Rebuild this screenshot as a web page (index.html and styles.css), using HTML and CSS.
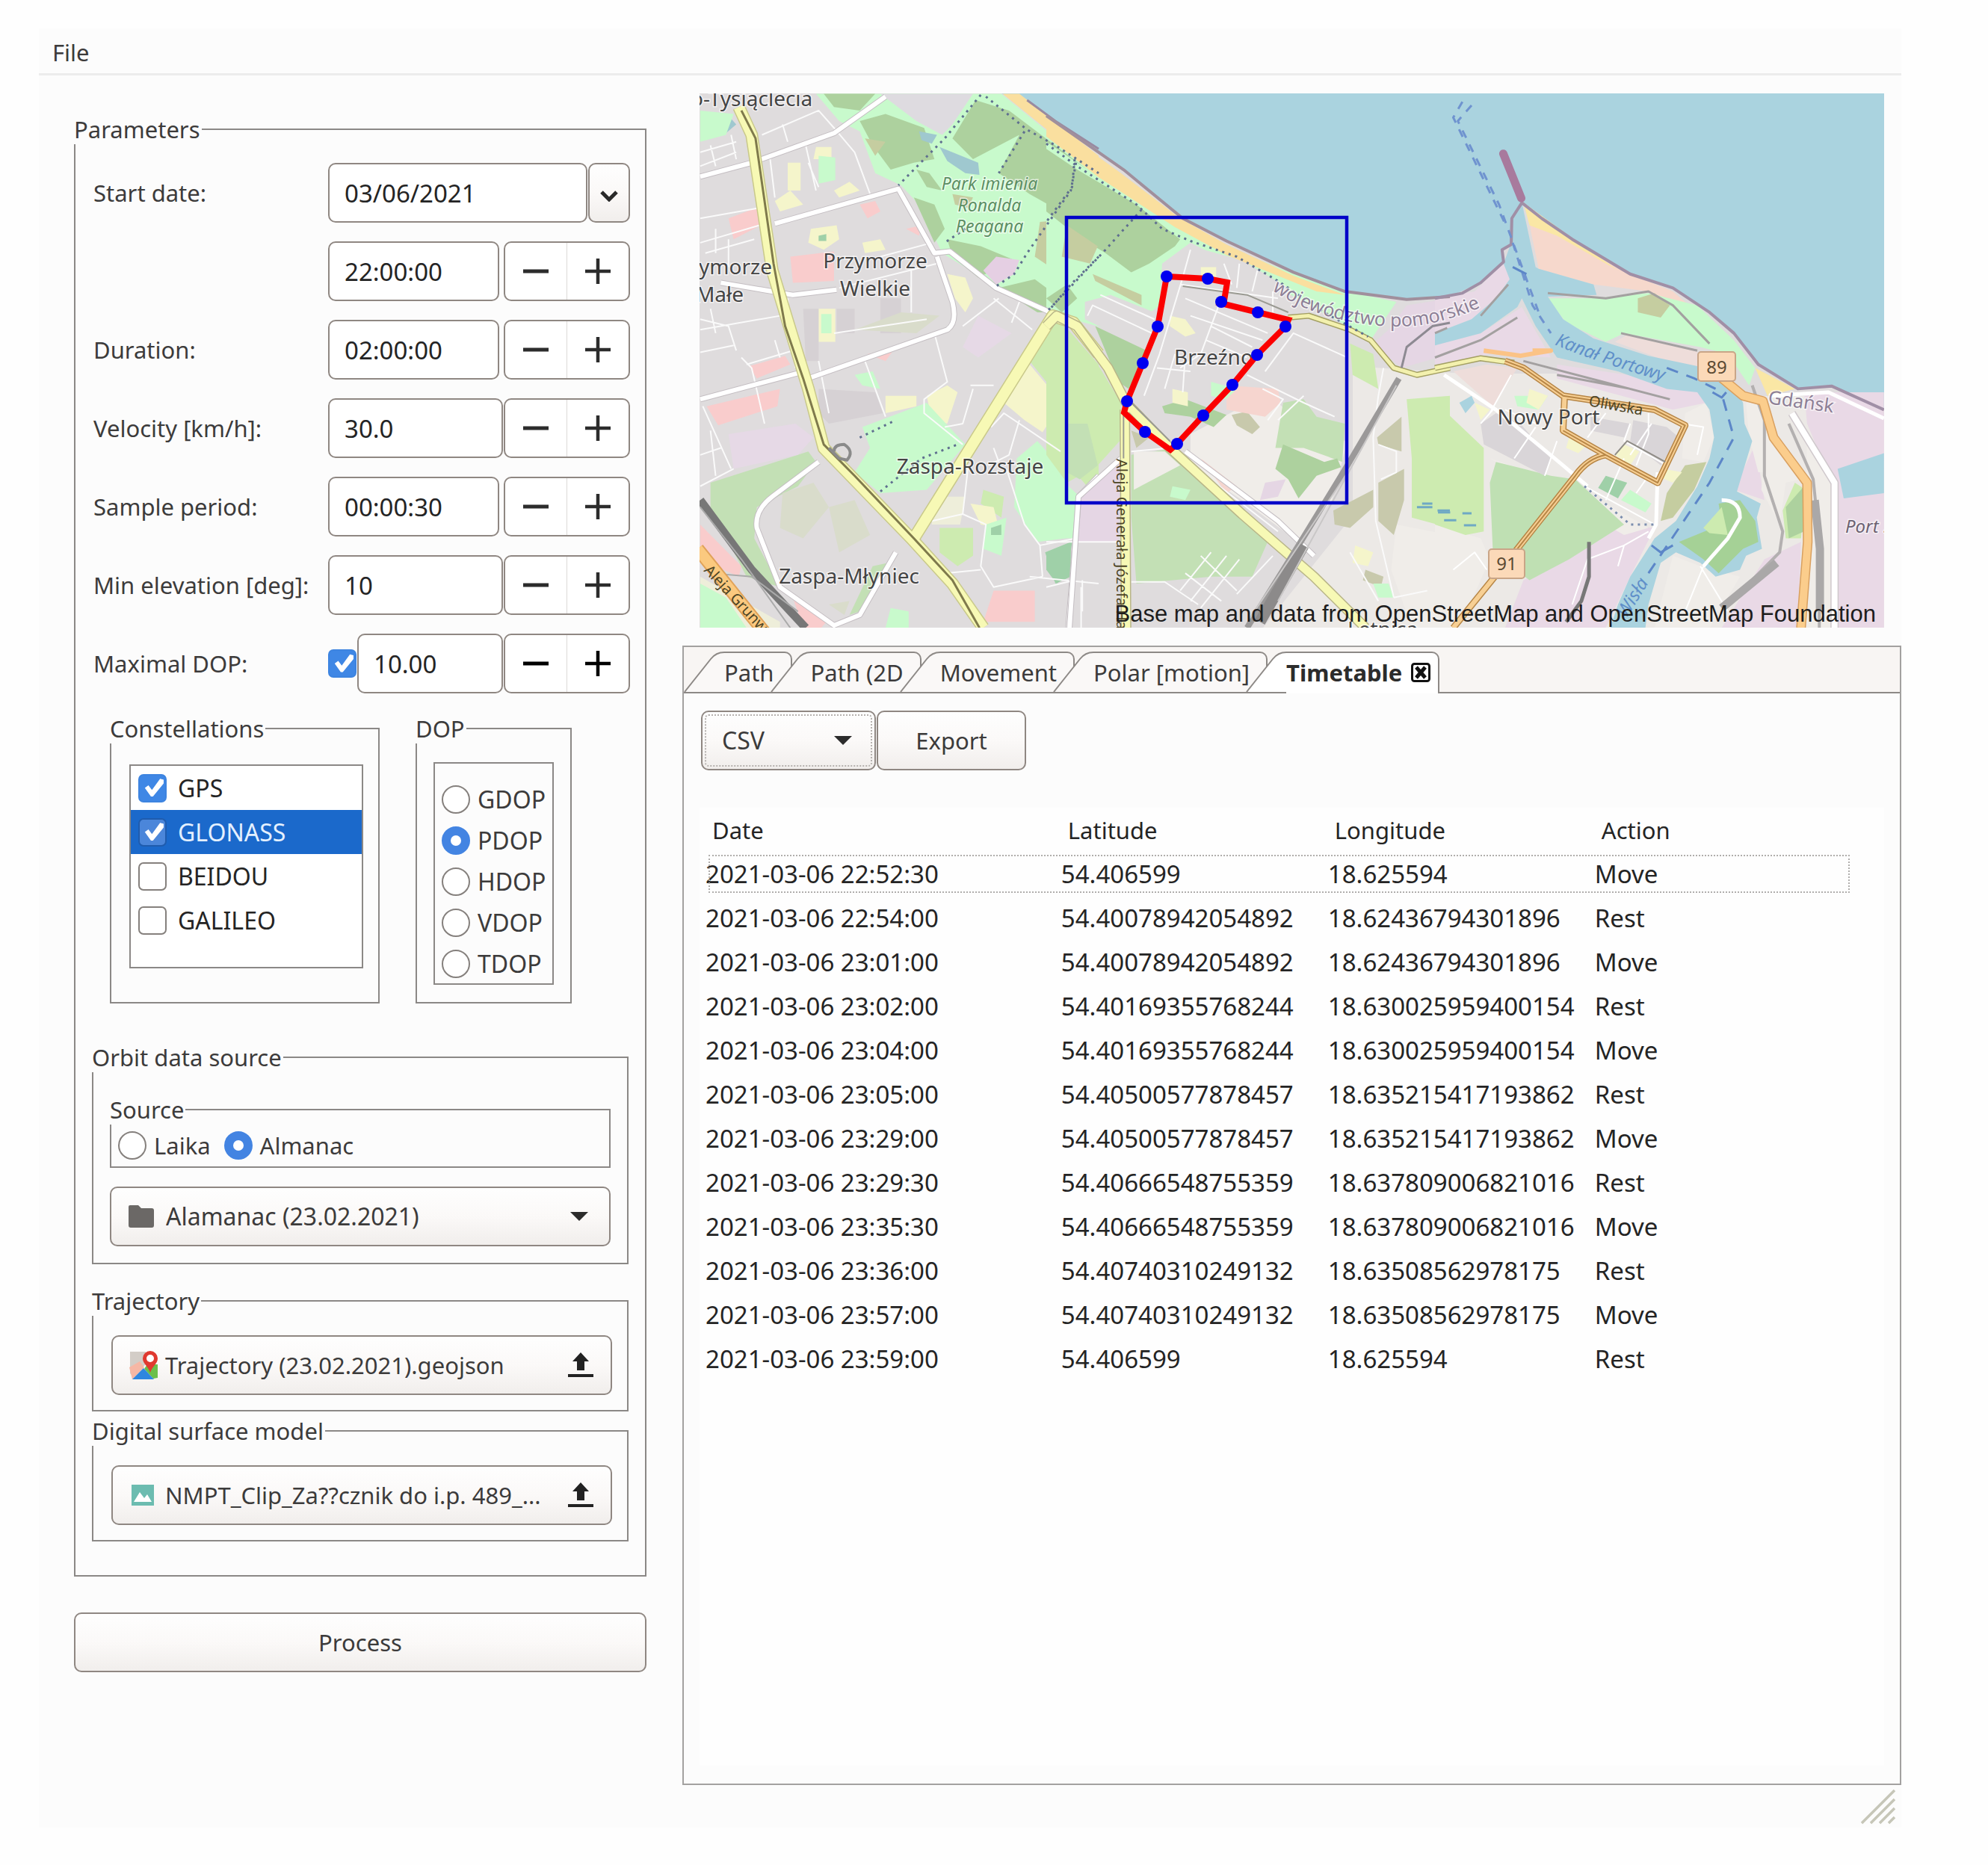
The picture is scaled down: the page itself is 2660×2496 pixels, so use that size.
FILE: index.html
```html
<!DOCTYPE html>
<html lang="en">
<head>
<meta charset="utf-8">
<title>GNSS planning</title>
<link rel="stylesheet" href="styles.css">
</head>
<body>
<svg class="defs" width="0" height="0" aria-hidden="true">
  <symbol id="minus" viewBox="0 0 34 34"><path d="M0 17H34" stroke="currentColor" stroke-width="5"/></symbol>
  <symbol id="plus" viewBox="0 0 34 34"><path d="M0 17H34M17 0V34" stroke="currentColor" stroke-width="4.5"/></symbol>
  <symbol id="caret" viewBox="0 0 24 12"><path d="M0 0H24L12 12Z" fill="currentColor"/></symbol>
  <symbol id="upload" viewBox="0 0 34 34"><path d="M17 0L28 12H22V24H12V12H6ZM0 29H34V33H0Z" fill="currentColor"/></symbol>
  <symbol id="slant" viewBox="0 0 54 54"><path d="M1 54L36 10Q43 1 54 1V54Z" fill="var(--tab)"/><path d="M1 54L36 10Q43 1 54 1" fill="none" stroke="#8d8986" stroke-width="2"/></symbol>
</svg>
<div class="window">
  <nav class="menubar"><button type="button" class="menu">File</button></nav>
  <main class="main">
    <form class="sidebar">
      <fieldset class="group params">
        <legend>Parameters</legend>
        <div class="rows">
          <div class="row"><label for="date">Start date:</label><div class="field"><input id="date" class="text" type="text" value="03/06/2021"><button type="button" class="drop" aria-label="Open calendar"><svg width="24" height="16" viewBox="0 0 24 16"><path d="M2 3L12 13L22 3" fill="none" stroke="#2a2a2a" stroke-width="5"/></svg></button></div></div>
          <div class="row"><span></span><div class="field time"><input class="text" type="text" value="22:00:00" aria-label="Start time"><div class="spin"><button type="button" aria-label="Less"><svg><use href="#minus"/></svg></button><button type="button" aria-label="More"><svg><use href="#plus"/></svg></button></div></div></div>
          <div class="row"><label for="dur">Duration:</label><div class="field time"><input id="dur" class="text" type="text" value="02:00:00"><div class="spin"><button type="button" aria-label="Less"><svg><use href="#minus"/></svg></button><button type="button" aria-label="More"><svg><use href="#plus"/></svg></button></div></div></div>
          <div class="row"><label for="vel">Velocity [km/h]:</label><div class="field"><input id="vel" class="text" type="text" value="30.0"><div class="spin"><button type="button" aria-label="Less"><svg><use href="#minus"/></svg></button><button type="button" aria-label="More"><svg><use href="#plus"/></svg></button></div></div></div>
          <div class="row"><label for="per">Sample period:</label><div class="field time"><input id="per" class="text" type="text" value="00:00:30"><div class="spin"><button type="button" aria-label="Less"><svg><use href="#minus"/></svg></button><button type="button" aria-label="More"><svg><use href="#plus"/></svg></button></div></div></div>
          <div class="row"><label for="elev">Min elevation [deg]:</label><div class="field"><input id="elev" class="text" type="text" value="10"><div class="spin"><button type="button" aria-label="Less"><svg><use href="#minus"/></svg></button><button type="button" aria-label="More"><svg><use href="#plus"/></svg></button></div></div></div>
          <div class="row"><label for="maxdop">Maximal DOP:</label><div class="field"><input type="checkbox" class="check" checked aria-label="Limit DOP"><input id="maxdop" class="text" type="text" value="10.00"><div class="spin strong"><button type="button" aria-label="Less"><svg><use href="#minus"/></svg></button><button type="button" aria-label="More"><svg><use href="#plus"/></svg></button></div></div></div>
        </div>

        <div class="pair">
          <fieldset class="group constellations">
            <legend>Constellations</legend>
            <div class="list">
              <label><input type="checkbox" class="check" checked>GPS</label>
              <label class="selected"><input type="checkbox" class="check" checked>GLONASS</label>
              <label><input type="checkbox" class="check">BEIDOU</label>
              <label><input type="checkbox" class="check">GALILEO</label>
            </div>
          </fieldset>
          <fieldset class="group dop">
            <legend>DOP</legend>
            <div class="radios">
              <label><input type="radio" name="dop" class="radio">GDOP</label>
              <label><input type="radio" name="dop" class="radio" checked>PDOP</label>
              <label><input type="radio" name="dop" class="radio">HDOP</label>
              <label><input type="radio" name="dop" class="radio">VDOP</label>
              <label><input type="radio" name="dop" class="radio">TDOP</label>
            </div>
          </fieldset>
        </div>

        <fieldset class="group orbit">
          <legend>Orbit data source</legend>
          <fieldset class="group source">
            <legend>Source</legend>
            <div class="inline">
              <label><input type="radio" name="src" class="radio">Laika</label>
              <label><input type="radio" name="src" class="radio" checked>Almanac</label>
            </div>
          </fieldset>
          <div class="combo">
            <svg class="combo-icon" width="34" height="32" viewBox="0 0 34 32"><path d="M2 1H13L17 5H31Q34 5 34 8V28Q34 31 31 31H3Q0 31 0 28V3Q0 1 2 1Z" fill="#6b6866"/></svg>
            <select class="button" aria-label="Almanac"><option>Alamanac (23.02.2021)</option></select>
            <svg class="caret" width="24" height="12"><use href="#caret"/></svg>
          </div>
        </fieldset>

        <fieldset class="group file">
          <legend>Trajectory</legend>
          <button type="button" class="button file-button">
            <svg width="38" height="38" viewBox="0 0 38 38"><path d="M1 1H22V18L5 34L1 30Z" fill="#d3cdc7"/><path d="M0 22L14 14L20 22L4 38Z" fill="#f6b7a5"/><path d="M24 18H38V36L32 37L20 24Z" fill="#6bbf4b"/><path d="M19 23L33 38H4Z" fill="#2f86e0"/><path d="M28 0A10 10 0 0 1 38 10C38 17 31 20 28 29C25 20 18 17 18 10A10 10 0 0 1 28 0Z" fill="#e0392f"/><circle cx="28" cy="10" r="5" fill="#fff"/></svg>
            <span>Trajectory (23.02.2021).geojson</span>
            <svg width="34" height="34"><use href="#upload"/></svg>
          </button>
        </fieldset>

        <fieldset class="group file dsm">
          <legend>Digital surface model</legend>
          <button type="button" class="button file-button">
            <svg width="38" height="38" viewBox="0 0 38 38"><path d="M3 5H33V33H3Z" fill="#6cbcb0"/><path d="M6 28L14 15L20 23L24 18L30 28Z" fill="#fff"/></svg>
            <span>NMPT_Clip_Za??cznik do i.p. 489_...</span>
            <svg width="34" height="34"><use href="#upload"/></svg>
          </button>
        </fieldset>
      </fieldset>
      <button type="button" class="button process">Process</button>
    </form>

    <section class="content">
      <svg class="map" viewBox="936 125 1585 715" role="img" aria-label="Map of Gdańsk with trajectory">
        <rect x="936" y="125" width="1585" height="715" fill="#aad3df"/>
        <path fill="#dfdcdd" d="M936 125H1340L1400 155L1503 227L1582 292L1641 322L1731 364L1799 390L1882 401L1940 397L1981 378L2012 350L2010 334L2022 325L2022 292L2036 269L2104 320L2185 367L2238 385L2287 418L2320 446L2353 488L2402 520L2451 516L2521 548V840H936Z"/>
        <path fill="#ece9e6" d="M1810 490L1960 500L2100 500L2280 530L2440 530L2521 560V840H1690L1810 690Z"/>

        <!-- west: areas -->
        <g class="ns" transform="translate(930 120) scale(.34439 .46556)">
          <path fill="#c8facc" d="M470 12H1190L1568 240V640L1380 640L1180 570L960 470L870 330L800 275L700 240L640 120L560 90Z"/>
          <path fill="#add19e" d="M500 12H700L640 60L540 50ZM640 90L740 70L890 110L930 200L850 210L760 230L690 160ZM1090 30L1220 60L1560 250L1568 330L1420 350L1300 300L1180 240L1260 130L1080 200L1000 140ZM1280 120L1480 210L1568 260V380L1420 330L1200 240ZM860 230L910 240L960 290L900 280ZM850 310L930 330L970 400L930 440ZM980 430L1110 450L1240 490L1100 540L1000 480ZM1180 570L1320 545L1420 600L1400 640L1330 640Z"/>
          <path fill="#c5cda0" d="M1340 380L1500 370L1568 390V480L1400 520L1320 480ZM660 140L740 150L700 190ZM1000 300L1080 310L1060 340L1010 330Z"/>
          <path fill="#dedbe0" d="M720 12H1080L1000 100L960 130L860 90Z"/>
          <path fill="#e5cfe3" d="M1170 480L1260 490L1240 530L1170 560L1120 520Z"/>
          <path fill="#9fc8cf" d="M870 120L940 130L920 155L880 145ZM950 165L1000 180L1100 210L1105 245L1050 240L980 205ZM130 75L160 100L120 125L100 120ZM810 955H870V985L820 980Z"/>
          <path fill="#cdebb0" d="M1380 650L1450 690L1568 790V1180L1500 1120L1400 1060L1390 980L1430 900L1300 780ZM950 1260H1080V1340L1020 1370L950 1330ZM1120 1150L1200 1170L1190 1230L1110 1190Z"/>
          <path fill="#f5f5cb" d="M1300 790L1425 900L1350 985L1280 950L1200 900ZM900 880L980 850L1020 870L980 960L920 950ZM1070 1190L1160 1200L1180 1260L1110 1250ZM740 880H860V910L740 930ZM450 400L550 390L560 430L500 460L440 440ZM480 630H545V725H480ZM360 210H410V290H360ZM470 165H530V200H460ZM540 290L600 265L640 290L560 310ZM310 320L370 290L420 330L330 350ZM980 530L1050 540L1080 600L1050 640L1010 600ZM650 440L720 430L740 460L660 470Z"/>
          <path fill="#c8facc" d="M650 970L900 900L1050 1020L900 1150L720 1160L620 1100L680 1030ZM1250 1060L1330 1010L1450 1110L1440 1290L1330 1300L1240 1200ZM490 645H530V700H490ZM480 190L545 195V260L480 270ZM620 820L690 810L720 860L650 850ZM20 60L150 70L120 130L20 150ZM1130 1250L1210 1230L1190 1340L1120 1320ZM760 1490L830 1500V1547H740Z"/>
          <path fill="#c3e0b5" d="M60 1130L440 1040L470 1070L400 1140L240 1200L230 1290L330 1430L200 1400L60 1200ZM690 1370L750 1360L640 1500L600 1510Z"/>
          <path fill="#9fd0a8" d="M1360 1330L1460 1300V1400L1400 1420ZM480 420L510 415V435H480ZM1150 1260L1190 1250V1280L1150 1280Z"/>
          <path fill="#f9cccc" d="M130 370L255 335V390L150 430ZM370 480L540 465V550L380 555ZM210 795L350 765L370 790L240 830ZM45 910L330 860L320 910L90 965ZM20 1250L180 1370L170 1400L80 1370L20 1320ZM640 330L700 320L720 350L670 370ZM820 400L880 390L870 420ZM670 760L770 750L740 780ZM1160 1440L1320 1440V1530H1120ZM380 1460L510 1530L490 1547L420 1547Z"/>
          <path fill="#e6d9e6" d="M130 990L390 960L460 1000L400 1050L150 1090ZM1100 650L1230 700L1100 770L1040 740ZM1490 1180L1568 1140V1300H1490Z"/>
          <path fill="#d6d1d4" d="M420 630H480V780H430ZM550 630H620V700H550ZM720 600H800V700H720ZM480 860L700 870L730 930L520 960L480 930Z"/>
          <path fill="#d9dccb" d="M340 1160L460 1130L520 1200L420 1290L330 1260ZM520 1200L620 1180L680 1280L560 1330ZM620 690L800 640L950 650L860 700ZM520 1480L600 1470L580 1510Z"/>
          <path fill="#eeeeda" d="M20 1400L330 1530L330 1547H20ZM920 1170H1050L1030 1250L920 1250Z"/>
          <path fill="#c8facc" d="M20 1420L120 1460L200 1547H20Z"/>
          <path fill="#fadf9f" d="M1195 12H1260L1568 190V235Z"/>
        </g>

        <!-- centre: areas -->
        <g class="ns" transform="translate(1400 120) scale(.34439 .46556)">
          <path fill="#c8facc" d="M0 150L200 250L500 380L760 470L1000 540L1170 580L1360 610L1260 720L1170 680L900 570L560 440L450 500L440 620L300 700L0 640Z"/>
          <path fill="#add19e" d="M0 170L120 230L350 330L520 430L500 450L400 500L330 525L230 470L120 420L0 350ZM0 600L80 560L120 600L60 640ZM190 680L390 750L320 860L280 840Z"/>
          <path fill="#c5cda0" d="M80 390L200 450L170 500L60 480ZM180 530L370 590L370 620L190 550Z"/>
          <path fill="#dfdcdd" d="M150 610L250 590L420 640L430 710L400 750L150 660ZM560 450L760 490L940 570L960 640L700 600L520 560Z"/>
          <path fill="#cdebb0" d="M0 680L80 690L200 790L290 900L285 1010L200 1080L80 1130L0 1050ZM1400 890L1568 880V1260L1420 1230L1420 1060ZM1180 730L1270 760L1290 860L1190 820Z"/>
          <path fill="#c3e0b5" d="M330 1050L500 1030L700 1180L860 1300L800 1400L640 1400L350 1420L330 1230ZM80 960L160 960L200 1080L130 1120L80 1100Z"/>
          <path fill="#f0ede9" d="M560 990L740 920L900 900L1040 1000L1170 1010L1110 1180L980 1300L760 1180L560 1080ZM1360 1250L1568 1280V1547H1420L1340 1380ZM340 1040L460 1040L520 1080L340 1150Z"/>
          <path fill="#c3e0b5" d="M920 900L1000 890L1050 940L1160 960L1150 1070L1000 1030L890 1030Z"/>
          <path fill="#add19e" d="M920 1020L1080 1070L1130 1060L1145 1085L1050 1110L980 1175L940 1120L890 1090ZM450 910L540 890L700 935L650 970L560 940L460 930Z"/>
          <path fill="#c8c9ac" d="M1285 1000L1380 940V1040L1290 1020ZM1290 1130L1390 1090V1180L1350 1280L1290 1240ZM1115 1210L1270 1150V1200L1180 1260L1120 1250ZM720 935L780 925L830 970L800 990L740 965ZM330 980L400 1000L350 1030ZM1240 1380L1310 1400L1300 1430L1230 1410Z"/>
          <path fill="#e5d6e4" d="M130 1180L290 1060L280 1300H120ZM850 1130L930 1120L900 1170L830 1180ZM1400 620L1568 600V760L1380 800L1270 730L1330 690Z"/>
          <path fill="#f6d5cf" d="M700 850L900 860L910 900L850 940L700 920ZM600 1060L740 1140L700 1160Z"/>
          <path fill="#f5f5cb" d="M480 650L540 660L580 700L540 710L480 680ZM490 860L550 870L550 910L490 900ZM1200 1310L1270 1330L1250 1370L1190 1360ZM600 510L660 510V540H600Z"/>
          <path fill="#c8facc" d="M490 1140L560 1150L540 1180L480 1170ZM0 1080L130 1170L110 1290H0ZM640 840L740 860L700 890L640 880ZM1270 1420L1330 1420L1350 1460L1290 1460Z"/>
          <path fill="#9fd0a8" d="M0 1330L100 1300L80 1400L40 1420L0 1380Z"/>
          <path fill="#fadf9f" d="M0 85L290 240L520 370L700 445L960 535L1160 590L1050 580L700 475L500 395L200 250L0 135Z"/>
        </g>

        <!-- east: areas -->
        <g class="ns" transform="translate(1920 120) scale(.40816 .46556)">
          <path fill="#e9d9e6" d="M0 600L130 580L225 500L245 545L200 600L120 660L0 700ZM0 735L150 700L285 625L380 770L180 760L0 790ZM400 790L860 850L890 900L780 920L400 830ZM1210 870H1472V1547H1310V1150L1220 960ZM980 1150L1050 1020L1080 1180ZM290 1410L600 1250L720 1260L640 1400L560 1547H230ZM1080 1350L1200 1300L1190 1547H940Z"/>
          <path fill="#f6d8cc" d="M300 330L380 390L640 530L780 580L860 640L700 580L520 560L340 515L315 410Z"/>
          <path fill="#fae7a5" d="M290 325L440 420L600 520L400 420L310 390ZM1050 800L1180 860L1090 880Z"/>
          <path fill="#c8facc" d="M370 600L520 600L700 585L860 620L980 720L1050 800L1030 850L960 760L870 740L620 700L560 725L430 670Z"/>
          <path fill="#c5cda0" d="M665 600L720 585L770 620L740 655L665 640Z"/>
          <path fill="#eeddda" d="M590 725L630 705L860 750L860 800L760 780ZM60 810L170 790L270 800L190 910Z"/>
          <path fill="#f0ede9" d="M820 930L890 900L915 1000L880 1070L810 1060ZM1020 900L1080 890L1090 1100L1060 1100L1030 1000ZM1090 960L1200 1120L1150 1130L1130 1250L1070 1150ZM0 1250L150 1290L180 1350L80 1547H0ZM780 1340L870 1370L1000 1400L900 1547H720ZM1220 1000L1300 1100V1547H1210ZM180 1060L480 1150L700 1260L620 1280Z"/>
          <path fill="#cdebb0" d="M0 890L40 930L160 1030V1270L100 1280L0 1250ZM1180 1130L1215 1150L1200 1290L1150 1290L1140 1210Z"/>
          <path fill="#bfe0b3" d="M200 1070L380 1110L460 1120L620 1250L440 1350L310 1410L190 1330L180 1130Z"/>
          <path fill="#add19e" d="M1150 1200L1210 1140L1210 1270L1160 1290Z"/>
          <path fill="#aad3df" d="M285 325L330 510L340 515L520 560L530 590L370 595L420 660L520 715L700 765L860 795L980 850L1010 900L1015 960L1040 1010L990 1155L1068 1190L1055 1230L1072 1320L1020 1340L1000 1380L920 1400L870 1360L790 1330L740 1360L700 1480L690 1547H575L600 1480L640 1400L720 1290L790 1240L860 1140L900 1060L915 1000L900 920L860 870L760 860L600 810L400 770L330 680L285 600L270 625L150 700L0 735V700L120 660L200 600L245 545L225 500L250 440L252 365ZM1320 1090L1472 1045V1160L1340 1175ZM80 900L120 880L130 900L100 930Z"/>
          <path fill="#a5d196" d="M800 1300L940 1250L930 1190L1000 1180L1050 1240L1060 1300L1010 1320L930 1390L880 1350Z"/>
          <path fill="#cdebb0" d="M880 1260L940 1200L960 1280L900 1275Z"/>
          <path fill="#c5cda0" d="M740 1240L760 1160L820 1080L890 1070L850 1150L780 1230Z"/>
          <path fill="#9fd0a8" d="M560 1110L630 1130L600 1175L535 1145Z"/>
          <path fill="#c8facc" d="M640 1150L710 1190L690 1215L610 1180ZM260 880L370 880L340 920L270 910Z"/>
          <path fill="#f5f5cb" d="M310 860L370 880L340 920L300 900ZM440 1000L500 1020L470 1045L430 1030ZM750 1090L810 1100L780 1130L740 1115ZM620 1020L670 1040L640 1080L590 1050ZM130 900L180 920L150 950Z"/>
          <path fill="#d9d5d8" d="M200 930L280 960L380 1060L360 1110L160 1020L150 960ZM510 940L640 960L620 1000L510 980ZM650 950L760 970L800 1000L740 1080L640 1010Z"/>
        </g>

        <!-- minor streets and main roads, west -->
        <g class="ns line" transform="translate(930 120) scale(.34439 .46556)">
          <path stroke="#fafafa" stroke-width="2" d="M20 180L160 150M20 220L160 180M60 160L80 220M140 130L160 200M260 130L480 60L540 110L620 180L680 300M340 100L360 150M430 160L470 290M440 210L480 280M290 190L310 310M20 440L250 390M40 470L230 430M130 430V510M80 400V470M20 690L330 650M20 660L130 680L160 750M60 630L80 700M20 755L150 735M180 770L220 800L270 960M310 720L330 770M200 790L380 750M30 910L140 1090M20 1050L100 1030M20 1140L150 1090M60 980L80 1110M660 780L740 940M930 700L980 840L890 890V930L1040 1020M1070 850L1160 850M1080 860L1040 960L970 970M560 570L940 500M720 480L920 440M360 600L390 800M480 780L520 930M1160 600L1310 690M1040 680L1180 600M1260 610L1230 670M1060 1090L1040 1220L1130 1250L1110 1370L1160 1430L1350 1400M920 1240L1040 1220M1210 1090L1280 1250L1340 1310L1350 1400M1340 1310L1480 1290M980 1390L1110 1380M1150 970L1200 930L1420 1040M1260 950L1220 1050L1140 1080M1160 1030L1180 1070M1300 1400L1568 1420M1500 1430V1547M20 370L250 340M840 520V640M540 700L900 660"/>
          <path stroke="#c4bec2" stroke-width="8" d="M20 250L220 210L540 125L740 20M310 385L790 285L930 470L990 465L1170 570L1380 640M440 830L980 690Q1020 670 1000 610L940 480M20 890L400 815M100 555L380 590L550 575M480 1070L300 1170Q230 1210 240 1260L330 1430L540 1540L640 1510L780 1330M1490 1180L1450 1547M1490 1170L1568 1110"/>
          <path stroke="#fff" stroke-width="6" d="M20 250L220 210L540 125L740 20M310 385L790 285L930 470L990 465L1170 570L1380 640M440 830L980 690Q1020 670 1000 610L940 480M20 890L400 815M100 555L380 590L550 575M480 1070L300 1170Q230 1210 240 1260L330 1430L540 1540L640 1510L780 1330M1490 1180L1450 1547M1490 1170L1568 1110"/>
          <path stroke="#c9c98a" stroke-width="17" d="M170 50L220 130L300 520L440 860L500 1030L840 1290L1000 1420L1120 1547M850 1290L1390 650L1470 670L1568 760"/>
          <path stroke="#f7f9b5" stroke-width="14" d="M170 50L220 130L300 520L440 860L500 1030L840 1290L1000 1420L1120 1547M850 1290L1390 650L1470 670L1568 760"/>
          <path stroke="#7f7a4c" stroke-width="3" d="M180 60L235 140L305 500L350 680L420 830L500 1020L620 1110L850 1290L1000 1410L1105 1547"/>
          <path stroke="#8a8a8a" stroke-width="4" d="M540 1040Q540 1020 580 1020Q620 1040 590 1065L560 1060L520 1030"/>
          <path stroke="#777" stroke-width="11" d="M20 1180L220 1380L430 1547"/>
          <path stroke="#aaa" stroke-width="2" d="M20 1200L180 1350L370 1547M60 1390L220 1400L400 1500"/>
          <path stroke="#e0a259" stroke-width="18" d="M10 1320L270 1560"/>
          <path stroke="#fbc97f" stroke-width="14" d="M10 1320L270 1560"/>
          <path stroke="#5f6f8f" stroke-width="3" stroke-dasharray="3 6" d="M1110 15L970 140L790 275M1130 20L1290 115L1400 160L1568 240M1280 120L1180 240M1480 210L1460 290L1290 470L1240 530L1160 570M1050 400L970 440M720 1155L880 1060L1020 1020M640 1000L780 950M1568 480L1460 560L1380 630"/>
          <path stroke="#998aa0" stroke-width="3" d="M1290 30L1400 90L1568 170"/>
        </g>

        <!-- centre: roads, railway, coast -->
        <g class="ns line" transform="translate(1400 120) scale(.34439 .46556)">
          <path stroke="#fafafa" stroke-width="2" d="M560 460L530 540L440 760L380 880M520 560L900 600M540 600L700 650L860 700M560 650L840 720M640 680L800 740M620 720L780 770M670 620L600 760M600 760L520 800M540 760L530 870M500 760L460 860M430 800L560 810M690 500L720 560M750 500L740 570M820 520L800 580M880 580V640M160 650L180 620L410 700M210 590L420 660M850 810L960 700L1080 740L1170 770M780 820L1000 900L1120 940M840 860L920 890L860 950M1000 880L900 950M1310 800L1290 880L1270 1000L1280 1240L1350 1460M1290 1020L1360 1040V1100L1300 1120M330 1040L480 1030L900 1270M140 1410V1500M330 1415H460L590 1480M520 1440L640 1330M560 1470L700 1340M600 1490L750 1350M540 1390L680 1470M600 1340L740 1440M1350 1460L1480 1440M0 1300L290 1300M0 1430L110 1410M1180 1330L1290 1470M740 1450L880 1340"/>
          <path stroke="#c4bec2" stroke-width="8" d="M290 1060L125 1170L90 1547M540 1040L900 1240L1040 1340"/>
          <path stroke="#fff" stroke-width="6" d="M290 1060L125 1170L90 1547M540 1040L900 1240L1040 1340"/>
          <path stroke="#b9b689" stroke-width="14" d="M0 680L40 650L120 680L240 800L310 900L480 1030L760 1220L1040 1400L1240 1547M305 920L310 1547"/>
          <path stroke="#f7f9b5" stroke-width="11" d="M0 680L40 650L120 680L240 800L310 900L480 1030L760 1220L1040 1400L1240 1547M305 920L310 1547"/>
          <path stroke="#a39f62" stroke-width="8" d="M940 655L1020 650L1180 690L1260 720L1350 800L1440 820L1568 800"/>
          <path stroke="#f3f1ae" stroke-width="5" d="M940 655L1020 650L1180 690L1260 720L1350 800L1440 820L1568 800"/>
          <path stroke="#9a9a92" stroke-width="2" d="M530 565L780 590L940 640M300 920L300 1060M330 900L480 1010"/>
          <path stroke="#9b9999" stroke-width="8" d="M1370 830L1170 1080L980 1310L780 1547"/>
          <path stroke="#8c8a8a" stroke-width="15" d="M1000 1310L830 1530"/>
          <path stroke="#c9c7c7" stroke-width="2" d="M1360 850L900 1470M1180 1090L790 1520"/>
          <path stroke="#8d8a92" stroke-width="3" d="M1380 800L1400 740L1500 680L1568 670"/>
          <path stroke="#5f6f8f" stroke-width="3" stroke-dasharray="3 6" d="M0 155L120 220L350 330L450 400L560 435L740 480L900 550L1080 640L1250 710M370 345L230 460L90 570L0 640M110 200L100 280L0 380"/>
          <path stroke="#a08f9c" stroke-width="4" d="M0 75L300 230L530 370L700 435L960 525L1160 580L1400 603L1568 595"/>
          <path stroke="#6fa9c4" stroke-width="3" d="M1440 1200H1500M1460 1190H1500M1520 1210H1568"/>
        </g>

        <!-- east: roads, railway, coast -->
        <g class="ns line" transform="translate(1920 120) scale(.40816 .46556)">
          <path stroke="#fff" stroke-width="2" d="M190 920L150 960M250 820L180 930M330 970L260 1060M400 1010L360 1110M640 960L620 1010L760 1080M560 930L500 1000M700 930V990L660 1080M710 960L640 1050M810 960L880 970L860 1050M620 1060L560 1180M490 1140L720 1250M660 1160L700 1110M450 1480L500 1350L620 1310L700 1270M620 1310L600 1370M60 1380L130 1330L170 1380M820 1500L880 1370M960 1500L870 1370M230 920L330 960"/>
          <path stroke="#fff" stroke-width="5" d="M30 820L200 920L420 1080L500 1140M730 1100L725 1250L700 1290M880 1370L960 1290L1000 1230Q1000 1180 940 1180M1095 880L1290 870L1472 945"/>
          <path stroke="#cfc8cc" stroke-width="11" d="M1170 930L1310 1130V1547"/>
          <path stroke="#fff" stroke-width="8" d="M1170 930L1310 1130V1547"/>
          <path stroke="#a3a0a0" stroke-width="3" d="M0 770L150 720L270 655M370 585L560 600L700 580L780 620L900 730M610 700L860 750M290 780L770 890M400 820L640 860M150 650L240 560M0 700L40 685"/>
          <path stroke="#b3b0b0" stroke-width="4" d="M1040 850L1080 950L1080 1110L1140 1270L1130 1330L960 1480M1160 960L1240 1120L1260 1290V1547"/>
          <path stroke="#aaa8a8" stroke-width="11" d="M1120 1360L940 1490M1245 1180L1262 1320V1500"/>
          <path stroke="#777" stroke-width="5" d="M505 1300V1400L480 1470L430 1530"/>
          <path stroke="#a39f62" stroke-width="8" d="M0 800L150 772L260 785"/>
          <path stroke="#f3f1ae" stroke-width="5" d="M0 800L150 772L250 785"/>
          <path stroke="#b78646" stroke-width="9" d="M230 780L290 800L420 880L720 920L820 965L730 1130L560 1050L420 980L425 880M560 1050Q500 1060 460 1110L270 1320L60 1547"/>
          <path stroke="#f7cf93" stroke-width="6" d="M230 780L290 800L420 880L720 920L820 965L730 1130L560 1050L420 980L425 880M560 1050Q500 1060 460 1110L270 1320L60 1547"/>
          <path stroke="#b78646" stroke-width="2" d="M230 780L290 800L420 880L720 920L820 965L730 1130L560 1050L420 980M560 1050Q500 1060 460 1110L270 1320"/>
          <path stroke="#8f8c86" stroke-width="2" d="M590 1050L630 1010L755 1070"/>
          <path stroke="#d9a060" stroke-width="13" d="M900 800L1010 880L1075 895L1110 1000L1220 1130L1222 1300L1200 1547"/>
          <path stroke="#fbcd8c" stroke-width="10" d="M900 800L1010 880L1075 895L1110 1000L1220 1130L1222 1300L1200 1547"/>
          <path stroke="#fbc386" stroke-width="6" d="M160 750L280 765L380 750L320 750"/>
          <path stroke="#a08fa6" stroke-width="4" d="M0 600L90 585L150 555L225 495L220 460L250 445L252 370L285 325L350 370L450 430L640 530L780 570L900 640L980 700L1060 790L1190 860L1300 852L1472 920"/>
          <path stroke="#a87a9d" stroke-width="11" stroke-linecap="round" d="M224 184L250 240L283 312"/>
          <path stroke="#6f93cf" stroke-width="3" stroke-dasharray="11 10" d="M90 35L60 80L230 385M120 45L75 90L210 330L340 640M255 440L320 620L380 700"/>
          <path stroke="#5c86c8" stroke-width="3" stroke-dasharray="16 12" d="M760 800L850 830L920 860M945 890L980 1000L900 1130L800 1260L700 1390"/>
          <path stroke="#5c86c8" stroke-width="3" d="M255 510L300 530M710 1310L740 1330L780 1310M910 870L940 885L955 870"/>
          <path stroke="#7a8dae" stroke-width="3" stroke-dasharray="3 6" d="M490 1140L640 1250L720 1250"/>
          <path stroke="#6fa9c4" stroke-width="3" d="M10 1215H50M90 1218H120M30 1238H70M95 1252H135"/>
        </g>

        <g class="place">
          <text x="924" y="142">o-Tysiąclecia</text>
          <text x="1033" y="367" text-anchor="end">ymorze</text>
          <text x="995" y="404" text-anchor="end">Małe</text>
          <text x="1171" y="359" text-anchor="middle">Przymorze</text>
          <text x="1171" y="396" text-anchor="middle">Wielkie</text>
          <text x="1298" y="634" text-anchor="middle">Zaspa-Rozstaje</text>
          <text x="1136" y="781" text-anchor="middle">Zaspa-Młyniec</text>
          <text x="1571" y="488">Brzeźno</text>
          <text x="2072" y="568" text-anchor="middle">Nowy Port</text>
          <text x="1803" y="852">Letnica</text>
        </g>
        <g class="park" text-anchor="middle">
          <text x="1324" y="254">Park imienia</text>
          <text x="1324" y="283">Ronalda</text>
          <text x="1324" y="311">Reagana</text>
        </g>
        <path id="shore" fill="none" d="M1702 388Q1744 417 1800 429T1900 435T1995 405"/>
        <path id="canal" fill="none" d="M2080 461Q2130 483 2242 515"/>
        <text class="border"><textPath href="#shore">województwo pomorskie</textPath></text>
        <text class="water"><textPath href="#canal">Kanał Portowy</textPath></text>
        <text class="water" transform="translate(2176 828) rotate(-58)">Wisła</text>
        <text class="border" transform="translate(2365 540) rotate(8)">Gdańsk</text>
        <text class="harbour" x="2469" y="713">Port .</text>
        <text class="street" transform="translate(2125 543) rotate(10)">Oliwska</text>
        <text class="street" transform="translate(1494 614) rotate(90)">Aleja Generała Józefa Hallera</text>
        <text class="street" transform="translate(941 764) rotate(47)">Aleja Grunwaldzka</text>
        <g class="shield">
          <rect x="1992" y="735" width="48" height="39" rx="4"/><text x="2016" y="763">91</text>
          <rect x="2272" y="471" width="50" height="39" rx="4"/><text x="2297" y="500">89</text>
        </g>

        <rect x="1427" y="291" width="375" height="382" fill="none" stroke="#0000c8" stroke-width="4.5"/>
        <path fill="none" stroke="#fb0000" stroke-width="8" d="M1561 370L1616 373L1642 378L1638 402L1634 406L1683 418L1724 428L1720 437L1682 475L1649 515L1610 556L1575 594L1566 602L1532 578L1504 552L1508 537L1529 486L1549 437Z"/>
        <g fill="#0000f0">
          <circle cx="1561" cy="370" r="8"/><circle cx="1616" cy="373" r="8"/><circle cx="1634" cy="404" r="8"/><circle cx="1683" cy="418" r="8"/><circle cx="1720" cy="437" r="8"/><circle cx="1682" cy="475" r="8"/><circle cx="1649" cy="515" r="8"/><circle cx="1610" cy="556" r="8"/><circle cx="1575" cy="594" r="8"/><circle cx="1532" cy="578" r="8"/><circle cx="1508" cy="537" r="8"/><circle cx="1529" cy="486" r="8"/><circle cx="1549" cy="437" r="8"/>
        </g>
        <text class="credit" x="2510" y="832" text-anchor="end">Base map and data from OpenStreetMap and OpenStreetMap Foundation</text>
      </svg>

      <div class="panel">
        <div class="tabs" role="tablist">
          <button type="button" role="tab" class="tab"><svg width="54" height="54"><use href="#slant"/></svg><span>Path</span></button>
          <button type="button" role="tab" class="tab"><svg width="54" height="54"><use href="#slant"/></svg><span>Path (2D</span></button>
          <button type="button" role="tab" class="tab"><svg width="54" height="54"><use href="#slant"/></svg><span>Movement</span></button>
          <button type="button" role="tab" class="tab"><svg width="54" height="54"><use href="#slant"/></svg><span>Polar [motion]</span></button>
          <button type="button" role="tab" class="tab active" aria-selected="true"><svg width="54" height="54"><use href="#slant"/></svg><span>Timetable<svg class="close" width="26" height="26" viewBox="0 0 26 26"><rect x="1.5" y="1.5" width="23" height="23" rx="3" fill="#fff" stroke="#111" stroke-width="3"/><path d="M7 6L19 20M19 6L7 20" stroke="#111" stroke-width="5"/></svg></span></button>
        </div>
        <div class="tools">
          <div class="combo format">
            <select class="button" aria-label="Export format"><option>CSV</option></select>
            <svg class="caret" width="24" height="12"><use href="#caret"/></svg>
          </div>
          <button type="button" class="button export">Export</button>
        </div>
        <div class="sheet">
          <table>
            <colgroup><col class="c-date"><col class="c-num"><col class="c-num"><col></colgroup>
            <thead><tr><th>Date</th><th>Latitude</th><th>Longitude</th><th>Action</th></tr></thead>
            <tbody>
              <tr class="focus"><td>2021-03-06 22:52:30</td><td>54.406599</td><td>18.625594</td><td>Move</td></tr>
              <tr><td>2021-03-06 22:54:00</td><td>54.40078942054892</td><td>18.62436794301896</td><td>Rest</td></tr>
              <tr><td>2021-03-06 23:01:00</td><td>54.40078942054892</td><td>18.62436794301896</td><td>Move</td></tr>
              <tr><td>2021-03-06 23:02:00</td><td>54.40169355768244</td><td>18.630025959400154</td><td>Rest</td></tr>
              <tr><td>2021-03-06 23:04:00</td><td>54.40169355768244</td><td>18.630025959400154</td><td>Move</td></tr>
              <tr><td>2021-03-06 23:05:00</td><td>54.40500577878457</td><td>18.635215417193862</td><td>Rest</td></tr>
              <tr><td>2021-03-06 23:29:00</td><td>54.40500577878457</td><td>18.635215417193862</td><td>Move</td></tr>
              <tr><td>2021-03-06 23:29:30</td><td>54.40666548755359</td><td>18.637809006821016</td><td>Rest</td></tr>
              <tr><td>2021-03-06 23:35:30</td><td>54.40666548755359</td><td>18.637809006821016</td><td>Move</td></tr>
              <tr><td>2021-03-06 23:36:00</td><td>54.40740310249132</td><td>18.63508562978175</td><td>Rest</td></tr>
              <tr><td>2021-03-06 23:57:00</td><td>54.40740310249132</td><td>18.63508562978175</td><td>Move</td></tr>
              <tr><td>2021-03-06 23:59:00</td><td>54.406599</td><td>18.625594</td><td>Rest</td></tr>
            </tbody>
          </table>
        </div>
      </div>
    </section>
  </main>
  <footer class="status"><svg width="48" height="48" viewBox="0 0 48 48"><path d="M2 46L46 2M14 46L46 14M26 46L46 26M38 46L46 38" stroke="#c6c6b8" stroke-width="3.5"/></svg></footer>
</div>
</body>
</html>
```
FILE: styles.css
```css
* { box-sizing: border-box; }

body {
  margin: 0;
  padding: 38px 116px 50px 52px;
  background: #fefefe;
  color: #3c3b3b;
  font: 31px/40px "Noto Sans", sans-serif;
}

button, input, select {
  margin: 0;
  font: inherit;
  color: inherit;
}

.defs { position: absolute; }

.window {
  display: flex;
  flex-direction: column;
  min-height: calc(100vh - 88px);
  background: #fcfcfc;
}

.menubar {
  height: 63px;
  padding: 12px 18px;
  border-bottom: 3px solid #ececec;
}

.menu {
  padding: 0;
  border: 0;
  background: none;
}

.main {
  flex: 1;
  display: grid;
  grid-template-columns: 766px minmax(0, 1fr);
  gap: 48px;
  padding: 24px 0 0 47px;
}

.sidebar { padding-top: 28px; }

/* group boxes */
.group {
  --side: 0px;
  min-width: 0;
  margin: 0;
  padding: 0;
  border: 2px solid #8b8886;
}

.group > legend {
  margin-left: calc(-2px - var(--side));
  padding: 0 2px 0 0;
  background: #fcfcfc;
}

.params {
  --side: 22px;
  padding: 25px 20px 45px 22px;
}

.rows {
  display: grid;
  gap: 25px;
}

.row {
  display: grid;
  grid-template-columns: 314px minmax(0, 1fr);
  align-items: center;
  padding-left: 2px;
}

.field {
  display: flex;
  align-items: center;
  gap: 1px;
  height: 80px;
}

.time { gap: 6px; }

.text {
  flex: 1;
  min-width: 0;
  height: 80px;
  padding: 0 20px;
  border: 2px solid #8f8782;
  border-radius: 10px;
  background: #fff;
  font-size: 33px;
  color: #242424;
}

.button, .drop {
  height: 80px;
  border: 2px solid #8f8782;
  border-radius: 10px;
  background: linear-gradient(#fefefe, #fbf9f8 50%, #f1eeec);
}

.drop {
  width: 56px;
  padding: 0;
}

.spin {
  display: flex;
  width: 169px;
  height: 80px;
  border: 2px solid #8f8782;
  border-radius: 10px;
  background: #fff;
  color: #2c2c2c;
}

.spin button {
  flex: 1;
  display: grid;
  place-items: center;
  padding: 0;
  border: 0;
  background: none;
}

.spin button + button { border-left: 1px solid #dcd9d8; }
.spin svg { width: 34px; height: 34px; }
.strong { color: #000; }

/* tick boxes and radios */
.check, .radio {
  appearance: none;
  flex: none;
  width: 38px;
  height: 38px;
  border: 2px solid #85807d;
  background: #fff;
}

.check { border-radius: 7px; }
.radio { border-radius: 50%; }

.check:checked {
  border-color: #3d84e0;
  background: #3f87e5;
}

.check:checked::before {
  content: "";
  display: block;
  height: 100%;
  background: #fff;
  clip-path: polygon(20% 50%, 34% 40%, 48% 58%, 80% 14%, 94% 18%, 94% 32%, 52% 84%, 44% 84%);
}

.selected .check {
  border-color: #1f5cae;
  background: #4b86da;
}

.radio:checked { border: 12px solid #4384e2; }

.pair {
  display: flex;
  gap: 48px;
  margin-top: 27px;
  padding-left: 24px;
}

.constellations {
  --side: 24px;
  width: 361px;
  padding: 28px 20px 45px 24px;
}

.list {
  min-height: 273px;
  border: 2px solid #8b8886;
  background: #fff;
  font-size: 32px;
  color: #242424;
}

.list label {
  display: flex;
  align-items: center;
  gap: 15px;
  height: 59px;
  padding-left: 10px;
}

.list .selected {
  background: #1b69cb;
  color: #e4f0ff;
}

.dop {
  --side: 22px;
  width: 209px;
  padding: 25px 22px 22px;
}

.radios {
  height: 298px;
  padding: 20px 0 0 9px;
  border: 2px solid #8b8886;
}

.radios label, .inline label {
  display: flex;
  align-items: center;
  gap: 10px;
  height: 55px;
}

.radios label { font-size: 32px; }

.orbit {
  --side: 22px;
  margin: 52px 2px 0 0;
  padding: 30px 22px 22px;
}

.inline {
  display: flex;
  gap: 18px;
  padding: 0 0 1px 9px;
}

.orbit .combo { margin-top: 25px; }

.combo {
  display: grid;
  align-items: center;
}

.combo > * { grid-area: 1 / 1; }

.combo select {
  appearance: none;
  width: 100%;
  padding: 0 60px 0 73px;
  font-size: 32px;
}

.combo svg {
  z-index: 1;
  pointer-events: none;
}

.combo-icon { margin-left: 25px; }

.caret {
  justify-self: end;
  margin-right: 30px;
  color: #2c2c2c;
}

.file {
  --side: 24px;
  margin: 29px 2px 0 0;
  padding: 26px 20px 20px 24px;
}

.dsm { margin-top: 6px; }

.file-button {
  display: flex;
  align-items: center;
  gap: 10px;
  width: 100%;
  padding: 0 23px 0 22px;
  color: #3c3b3b;
}

.file-button span {
  flex: 1;
  min-width: 0;
  text-align: left;
  white-space: nowrap;
}

.file-button svg { flex: none; color: #222; }

.process {
  width: 100%;
  margin-top: 48px;
}

/* map */
.content {
  display: flex;
  flex-direction: column;
  min-width: 0;
}

.map {
  display: block;
  margin: 0 23px 24px 23px;
  overflow: hidden;
}

.ns path { vector-effect: non-scaling-stroke; }

.line path {
  fill: none;
  stroke-linejoin: round;
}

.map text {
  paint-order: stroke;
  stroke: #ffffffa0;
  stroke-width: 3px;
}

.place text { font-size: 28px; fill: #444; }

.park text {
  font-size: 23px;
  font-style: italic;
  fill: #5c8f63;
}

.map .border { font-size: 25px; fill: #8d7f96; }

.map .harbour {
  font-size: 24px;
  font-style: italic;
  fill: #6d6272;
}

.map .water {
  font-size: 24px;
  font-style: italic;
  fill: #5f8fc9;
  stroke: none;
}

.map .street {
  font-size: 20px;
  fill: #4d4526;
  stroke: none;
}

.shield rect { fill: #fbd9b8; stroke: #c9a587; stroke-width: 2px; }

.shield text {
  font-size: 24px;
  fill: #5c4a33;
  stroke: none;
  text-anchor: middle;
}

.map .credit {
  font-family: "Liberation Sans", sans-serif;
  font-size: 31px;
  fill: #1c1c1c;
  stroke: none;
}

/* tab panel */
.panel {
  flex: 1;
  border: 2px solid #a3a1a0;
}

.tabs {
  display: flex;
  align-items: flex-end;
  height: 62px;
  border-bottom: 2px solid #8d8986;
  background: #f8f5f3;
}

.tab {
  --tab: #faf8f7;
  display: flex;
  height: 54px;
  margin-left: -29px;
  padding: 0;
  border: 0;
  background: none;
}

.tab:first-child { margin-left: 0; }
.tab > svg { flex: none; }

.tab span {
  display: flex;
  align-items: center;
  gap: 12px;
  height: 54px;
  padding-right: 22px;
  border-top: 2px solid #8d8986;
  border-right: 2px solid #8d8986;
  border-top-right-radius: 10px;
  background: var(--tab);
  white-space: nowrap;
}

.active {
  --tab: #fff;
  height: 56px;
  margin-bottom: -2px;
  font-weight: bold;
  color: #2c2c2c;
}

.active span {
  height: 56px;
  padding: 0 10px 2px 0;
}

.tools {
  display: flex;
  gap: 1px;
  padding: 23px 23px 50px;
}

.format { width: 234px; }

.format select {
  padding: 0 0 0 26px;
  outline: 2px dotted #b5b1ae;
  outline-offset: -7px;
}

.format .caret { margin-right: 32px; }
.export { width: 200px; }

.sheet {
  margin: 0 21px;
  padding: 0 42px 0 8px;
  min-height: 1282px;
  background: #fefefe;
}

table {
  width: 100%;
  table-layout: fixed;
  border-collapse: collapse;
  color: #242424;
}

.c-date { width: 31%; }
.c-num { width: 357px; }

th, td {
  height: 59px;
  padding: 0;
  text-align: left;
  font-weight: normal;
  white-space: nowrap;
}

td { font-size: 33px; }
th { padding-left: 9px; }

.focus {
  outline: 2px dotted #b0aeac;
  outline-offset: -6px;
  border-radius: 5px;
}

.status {
  display: flex;
  justify-content: flex-end;
  height: 57px;
  padding: 5px 7px;
}
```
